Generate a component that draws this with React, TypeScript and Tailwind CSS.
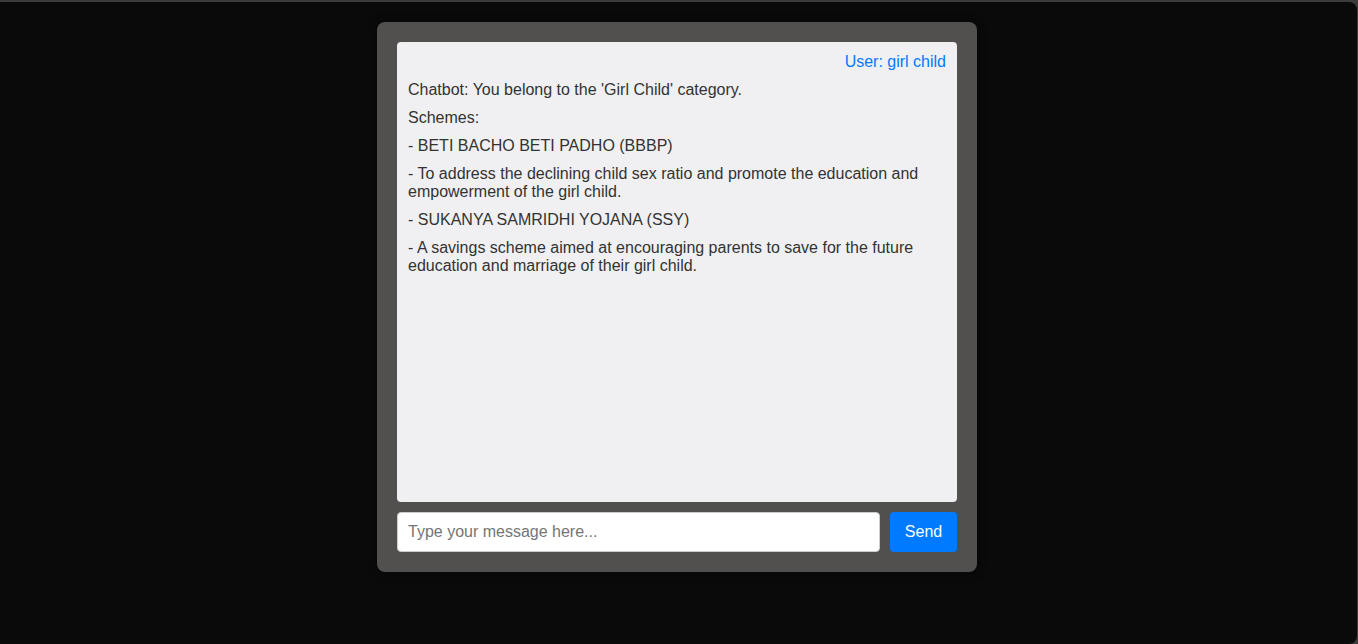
import React, { useState } from 'react';

const messages = [
  "Chatbot: You belong to the 'Girl Child' category.",
  'Schemes:',
  '- BETI BACHO BETI PADHO (BBBP)',
  '- To address the declining child sex ratio and promote the education and empowerment of the girl child.',
  '- SUKANYA SAMRIDHI YOJANA (SSY)',
  '- A savings scheme aimed at encouraging parents to save for the future education and marriage of their girl child.',
];

export default function App() {
  const [text, setText] = useState('');

  return (
    <div className="h-[644px] bg-[#3c3c3c] pt-[2px] pr-[1px]" style={{ fontFamily: '"Liberation Sans", Arial, sans-serif' }}>
      <div className="flex h-full justify-center rounded-r-[8px] bg-[#0a0a0a] pt-[20px] pr-[3px]">
        <div className="flex h-[550px] w-[600px] flex-col rounded-[8px] bg-[#52504e] p-[20px] shadow-[0_0_10px_rgba(0,0,0,0.5)]">
          <div className="h-[460px] overflow-y-auto rounded-[4px] bg-[#f0f0f2] px-[11px] pt-[11px] pb-[10px] text-[16px] leading-[18px] text-[#333]">
            <div className="mb-[10px] text-right text-[#007bff]">User: girl child</div>
            {messages.map((m, i) => (
              <div key={i} className="mb-[10px]">
                {m}
              </div>
            ))}
          </div>
          <div className="mt-[10px] flex gap-[10px]">
            <input
              value={text}
              onChange={(e) => setText(e.target.value)}
              placeholder="Type your message here..."
              className="h-[40px] flex-1 rounded-[4px] border border-[#ccc] bg-white px-[10px] text-[16px] text-[#333] placeholder:text-[#757575] outline-none"
            />
            <button className="h-[40px] w-[67px] rounded-[4px] bg-[#007bff] text-[16px] text-white">Send</button>
          </div>
        </div>
      </div>
    </div>
  );
}
